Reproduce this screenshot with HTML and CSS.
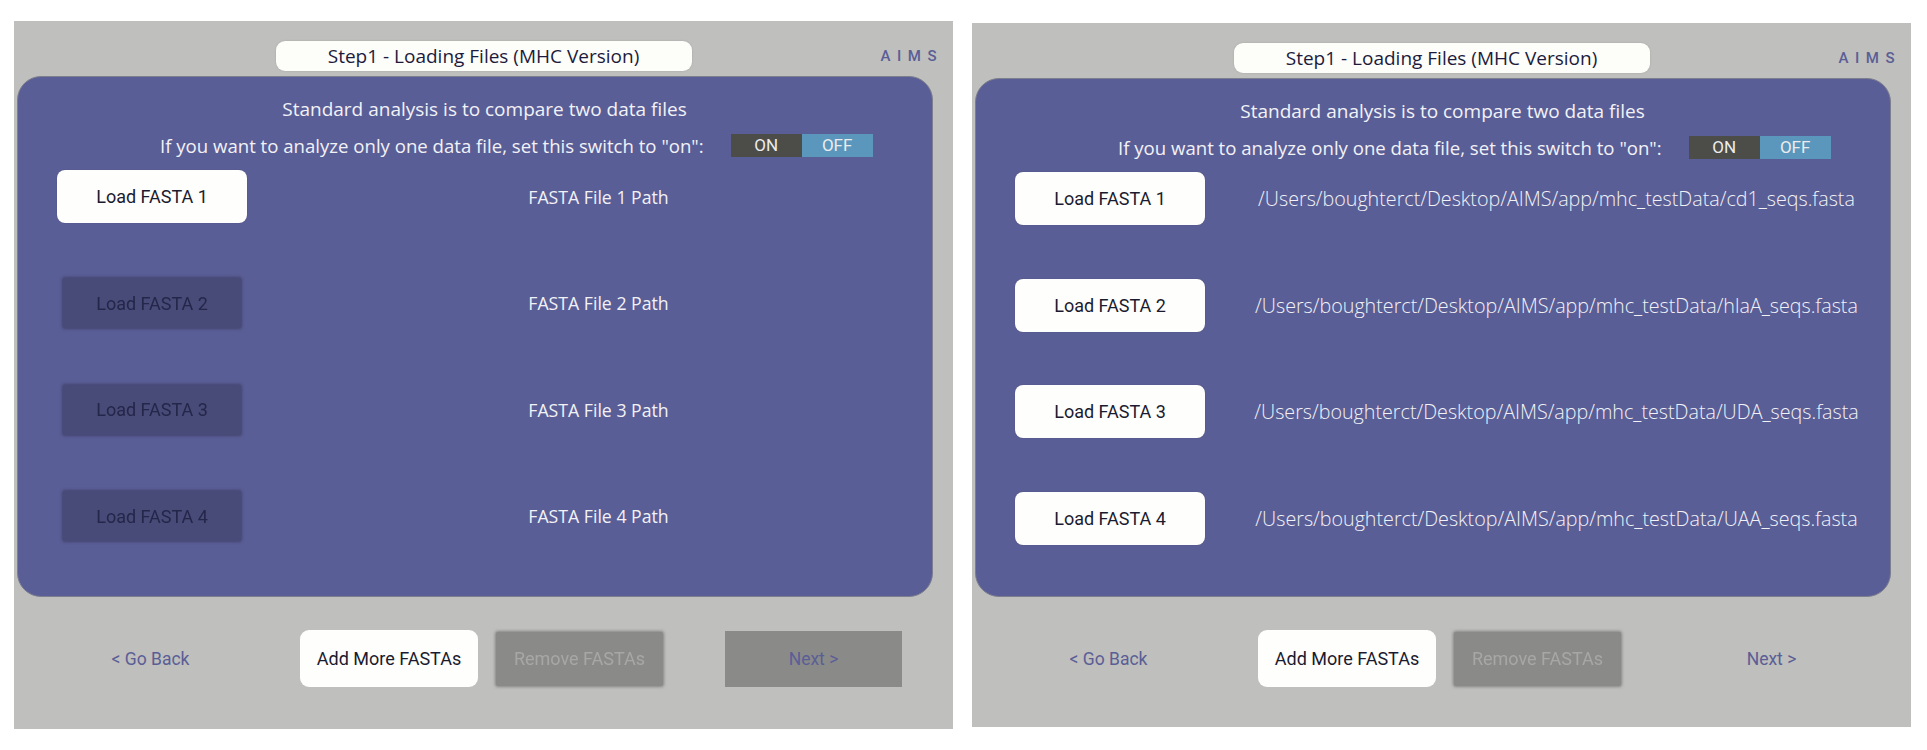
FILE: index.html
```html
<!DOCTYPE html>
<html>
<head>
<meta charset="utf-8">
<link rel="stylesheet" href="styles.css">
</head>
<body>
<div class="screens">
  <section class="panel">
    <header class="header">
      <div class="title">Step1 - Loading Files (MHC Version)</div>
      <div class="brand">AIMS</div>
    </header>
    <div class="card">
      <p class="intro">Standard analysis is to compare two data files</p>
      <div class="switch-row">
        <span class="switch-label">If you want to analyze only one data file, set this switch to "on":</span>
        <div class="switch"><span class="sw-on">ON</span><span class="sw-off">OFF</span></div>
      </div>
      <div class="rows">
        <div class="row"><button class="load">Load FASTA 1</button><span class="path">FASTA File 1 Path</span></div>
        <div class="row"><button class="load load--off">Load FASTA 2</button><span class="path">FASTA File 2 Path</span></div>
        <div class="row"><button class="load load--off">Load FASTA 3</button><span class="path">FASTA File 3 Path</span></div>
        <div class="row"><button class="load load--off">Load FASTA 4</button><span class="path">FASTA File 4 Path</span></div>
      </div>
    </div>
    <footer class="footer">
      <span class="back">&lt; Go Back</span>
      <button class="add">Add More FASTAs</button>
      <button class="remove">Remove FASTAs</button>
      <button class="next next--off">Next &gt;</button>
    </footer>
  </section>

  <section class="panel panel--right">
    <header class="header">
      <div class="title">Step1 - Loading Files (MHC Version)</div>
      <div class="brand">AIMS</div>
    </header>
    <div class="card">
      <p class="intro">Standard analysis is to compare two data files</p>
      <div class="switch-row">
        <span class="switch-label">If you want to analyze only one data file, set this switch to "on":</span>
        <div class="switch"><span class="sw-on">ON</span><span class="sw-off">OFF</span></div>
      </div>
      <div class="rows">
        <div class="row"><button class="load">Load FASTA 1</button><span class="path path--file">/Users/boughterct/Desktop/AIMS/app/mhc_testData/cd1_seqs.fasta</span></div>
        <div class="row"><button class="load">Load FASTA 2</button><span class="path path--file">/Users/boughterct/Desktop/AIMS/app/mhc_testData/hlaA_seqs.fasta</span></div>
        <div class="row"><button class="load">Load FASTA 3</button><span class="path path--file">/Users/boughterct/Desktop/AIMS/app/mhc_testData/UDA_seqs.fasta</span></div>
        <div class="row"><button class="load">Load FASTA 4</button><span class="path path--file">/Users/boughterct/Desktop/AIMS/app/mhc_testData/UAA_seqs.fasta</span></div>
      </div>
    </div>
    <footer class="footer">
      <span class="back">&lt; Go Back</span>
      <button class="add">Add More FASTAs</button>
      <button class="remove">Remove FASTAs</button>
      <button class="next">Next &gt;</button>
    </footer>
  </section>
</div>
</body>
</html>
```

FILE: styles.css
```css
* { box-sizing: border-box; }

html, body {
  margin: 0;
  padding: 0;
  background: #ffffff;
}

body {
  width: 1927px;
  height: 750px;
  overflow: hidden;
  font-family: "Open Sans", "Liberation Sans", sans-serif;
}

.screens {
  display: flex;
  align-items: flex-start;
  gap: 19px;
  padding: 21px 0 0 14px;
}

.panel {
  width: 939px;
  height: 708px;
  background: #bfbfbd;
  display: flex;
  flex-direction: column;
}

.panel--right {
  margin-top: 2px;
  height: 704px;
}

/* header */
.header {
  display: grid;
  grid-template-columns: 1fr auto 1fr;
  align-items: center;
  height: 55px;
  padding: 20px 0 5px 0;
}

.title {
  grid-column: 2;
  width: 416px;
  height: 30px;
  background: #fdfdfa;
  border-radius: 9px;
  display: flex;
  align-items: center;
  justify-content: center;
  color: #1c1b3d;
  font-size: 19px;
  font-weight: 500;
  box-shadow: 0 0 2px rgba(0,0,0,0.15);
}

.brand {
  grid-column: 3;
  justify-self: end;
  color: #5a5e96;
  font-family: Roboto, "Liberation Sans", sans-serif;
  font-size: 15px;
  font-weight: 500;
  letter-spacing: 6.5px;
  margin-right: 10px;
}

/* blue card */
.card {
  margin: 0 20px 0 3px;
  height: 521px;
  background: #5a5e96;
  border: 1px solid #7d7f8e;
  border-radius: 24px;
  color: #f2f2f6;
}

.panel--right .card {
  height: 519px;
}

.intro {
  margin: 21px 0 0 19px;
  height: 22px;
  line-height: 22px;
  text-align: center;
  font-size: 19px;
  font-weight: 500;
}

.switch-row {
  display: flex;
  align-items: center;
  gap: 27px;
  margin-top: 13px;
  padding-left: 142px;
  height: 24px;
}

.switch-label {
  font-size: 18.6px;
  font-weight: 500;
  white-space: nowrap;
}

.switch {
  display: flex;
  height: 23px;
  font-family: Roboto, "Liberation Sans", sans-serif;
  font-size: 17px;
  color: #ececec;
}

.switch span {
  width: 71px;
  display: flex;
  align-items: center;
  justify-content: center;
}

.sw-on { background: #4c4d49; }
.sw-off { background: #5b96bd; }

.rows {
  display: flex;
  flex-direction: column;
  gap: 53.5px;
  margin-top: 13px;
}

.row {
  display: flex;
  align-items: center;
  height: 53px;
}

button {
  font: inherit;
  border: none;
  padding: 0;
  margin: 0;
}

.load {
  width: 190px;
  height: 53px;
  margin-left: 39px;
  background: #fefefc;
  border-radius: 8px;
  color: #1b1b30;
  font-family: Roboto, "Liberation Sans", sans-serif;
  font-size: 18px;
  box-shadow: 0 0 1px rgba(0,0,0,0.3);
}

.load--off {
  width: 178px;
  height: 50px;
  margin: 0 6px 0 45px;
  background: #484b77;
  color: #24264a;
  border-radius: 2px;
  box-shadow: 0 0 3px 1px rgba(60,62,100,0.8);
  filter: blur(0.5px);
}

.path {
  flex: 1;
  text-align: center;
  padding-left: 18px;
  font-size: 17.7px;
  font-weight: 400;
  white-space: nowrap;
}

.path--file {
  font-weight: 300;
  font-size: 19.7px;
}

/* footer */
.footer {
  display: flex;
  align-items: center;
  height: 57px;
  margin-top: 33px;
}

.back {
  width: 273px;
  text-align: center;
  color: #5a5e96;
  font-family: Roboto, "Liberation Sans", sans-serif;
  font-size: 17.5px;
}

.add {
  width: 178px;
  height: 57px;
  margin-left: 13px;
  background: #fefefc;
  border-radius: 9px;
  color: #1b1b30;
  font-family: Roboto, "Liberation Sans", sans-serif;
  font-size: 18px;
}

.remove {
  width: 167px;
  height: 54px;
  margin-left: 18px;
  background: #8a8b88;
  color: #a7a8a5;
  border-radius: 2px;
  font-family: Roboto, "Liberation Sans", sans-serif;
  font-size: 18px;
  box-shadow: 0 0 3px 1px rgba(110,110,110,0.7);
  filter: blur(0.5px);
}

.next {
  width: 177px;
  height: 56px;
  margin-left: 62px;
  background: transparent;
  color: #5a5e96;
  font-family: Roboto, "Liberation Sans", sans-serif;
  font-size: 17.5px;
}

.next--off {
  background: #8a8b88;
}
```
